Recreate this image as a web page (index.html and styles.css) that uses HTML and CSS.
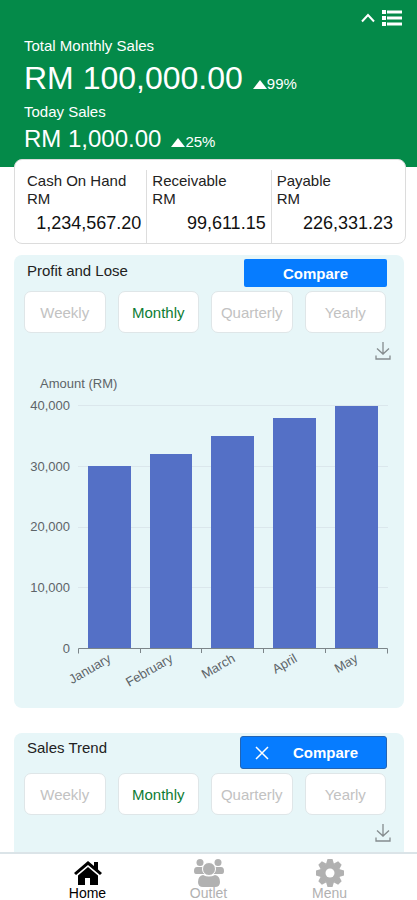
FILE: index.html
```html
<!DOCTYPE html>
<html lang="en">
<head>
<meta charset="utf-8">
<meta name="viewport" content="width=device-width, initial-scale=1">
<title>Sales Dashboard</title>
<link rel="stylesheet" href="styles.css">
</head>
<body>
<header class="hero">
  <div class="hero-tools">
    <button class="icon-button" type="button" aria-label="Collapse">
      <svg width="16" height="16" viewBox="0 0 16 16" fill="none" stroke="currentColor" stroke-width="2"><path d="M2 11.5 8 5l6 6.500"/></svg>
    </button>
    <button class="icon-button" type="button" aria-label="List">
      <svg width="20" height="16" viewBox="0 0 20 16" fill="currentColor"><path d="M0 0h4v4H0zM0 6h4v4H0zM0 12h4v4H0zM5 .5h15v3H5zM5 6.500h15v3H5zM5 12.500h15v3H5z"/></svg>
    </button>
  </div>
  <p class="hero-label">Total Monthly Sales</p>
  <p class="hero-value hero-value-large">RM 100,000.00
    <span class="change"><svg width="14" height="9" viewBox="0 0 14 9" fill="currentColor"><path d="M7 0 14 9H0z"/></svg>99%</span>
  </p>
  <p class="hero-label">Today Sales</p>
  <p class="hero-value">RM 1,000.00
    <span class="change"><svg width="14" height="9" viewBox="0 0 14 9" fill="currentColor"><path d="M7 0 14 9H0z"/></svg>25%</span>
  </p>
</header>

<main class="content">
  <section class="balances">
    <div class="balance"><span>Cash On Hand</span><span>RM</span><span class="balance-value">1,234,567.20</span></div>
    <div class="balance"><span>Receivable</span><span>RM</span><span class="balance-value">99,611.15</span></div>
    <div class="balance"><span>Payable</span><span>RM</span><span class="balance-value">226,331.23</span></div>
  </section>

  <section class="panel">
    <div class="panel-head">
      <h2>Profit and Lose</h2>
      <button class="compare" type="button">Compare</button>
    </div>
    <div class="periods">
      <button type="button">Weekly</button>
      <button type="button" class="active">Monthly</button>
      <button type="button">Quarterly</button>
      <button type="button">Yearly</button>
    </div>
    <button class="icon-button download" type="button" aria-label="Download">
      <svg width="16" height="18" viewBox="0 0 16 18" fill="none" stroke="currentColor" stroke-width="1.300"><path d="M8 0v12M2 6.500l6 5.500 6-5.500M1 13.500V17h14v-3.500"/></svg>
    </button>
    <svg class="chart" viewBox="0 0 390 336" role="img" aria-label="Amount by month">
      <text x="26" y="17">Amount (RM)</text>
      <g class="grid"><path d="M64 34.500H374M64 95.500H374M64 156.500H374M64 216.500H374"/></g>
      <g class="scale">
        <text x="56" y="39">40,000</text>
        <text x="56" y="100">30,000</text>
        <text x="56" y="160">20,000</text>
        <text x="56" y="221">10,000</text>
        <text x="56" y="282">0</text>
      </g>
      <g class="bars">
        <rect x="74" y="95" width="43" height="182"/>
        <rect x="136" y="83" width="42" height="194"/>
        <rect x="197" y="65" width="43" height="212"/>
        <rect x="259" y="47" width="43" height="230"/>
        <rect x="321" y="35" width="43" height="242"/>
      </g>
      <path class="axis" d="M64.500 282.500v-5H373.500v5M126.500 277v5M187.500 277v5M249.500 277v5M311.500 277v5"/>
      <g class="months">
        <text transform="translate(98 290) rotate(-30)">January</text>
        <text transform="translate(160 290) rotate(-30)">February</text>
        <text transform="translate(222 290) rotate(-30)">March</text>
        <text transform="translate(284 290) rotate(-30)">April</text>
        <text transform="translate(345 290) rotate(-30)">May</text>
      </g>
    </svg>
  </section>

  <section class="panel panel-last">
    <div class="panel-head">
      <h2>Sales Trend</h2>
      <button class="compare compare-open" type="button">
        <svg width="14" height="14" viewBox="0 0 14 14" fill="none" stroke="currentColor" stroke-width="1.500"><path d="m1 1 12 12M13 1 1 13"/></svg>
        <span>Compare</span>
      </button>
    </div>
    <div class="periods">
      <button type="button">Weekly</button>
      <button type="button" class="active">Monthly</button>
      <button type="button">Quarterly</button>
      <button type="button">Yearly</button>
    </div>
    <button class="icon-button download" type="button" aria-label="Download">
      <svg width="16" height="18" viewBox="0 0 16 18" fill="none" stroke="currentColor" stroke-width="1.300"><path d="M8 0v12M2 6.500l6 5.500 6-5.500M1 13.500V17h14v-3.500"/></svg>
    </button>
  </section>
</main>

<nav class="tabbar">
  <a href="#home" class="current">
    <svg width="28" height="24" viewBox="0 0 28 24" fill="currentColor"><path d="M14 0 0 12l2 2L14 4l12 10 2-2-4-3.500V1h-4v4z"/><path d="M14 6 4 14.500V24h7v-7h5v7h8v-9.500z"/></svg>
    Home
  </a>
  <a href="#outlet">
    <svg width="30" height="28" viewBox="0 0 30 28" fill="currentColor"><circle cx="6" cy="3.500" r="3.500"/><circle cx="24" cy="3.500" r="3.500"/><path d="M3 8h5q1 0 1 2 0 3 2 5H2q-2 0-2-3 0-4 3-4zM27 8h-5q-1 0-1 2 0 3-2 5h9q2 0 2-3 0-4-3-4z"/><circle cx="15" cy="10" r="6.500" stroke="#fff"/><path d="M9 16q6 3 12 0 5 1 5 7 0 5-5 5H9q-5 0-5-5 0-6 5-7z"/></svg>
    Outlet
  </a>
  <a href="#menu">
    <svg width="28" height="28" viewBox="-14 -14 28 28"><g fill="currentColor"><circle r="10"/><g id="teeth"><path id="tooth" d="m-4-9 1.500-5h5L4-9zM-4 9l1.500 5h5L4 9z"/><use href="#tooth" transform="rotate(45)"/></g><use href="#teeth" transform="rotate(90)"/></g><circle r="4.500" fill="#fff"/></svg>
    Menu
  </a>
</nav>
</body>
</html>
```
FILE: styles.css
```css
* {
  box-sizing: border-box;
}

body {
  margin: 0;
  min-height: 100vh;
  display: flex;
  flex-direction: column;
  background: #fff;
  color: #222;
  font-family: "Liberation Sans", Arial, sans-serif;
  font-size: 15px;
}

p,
h2 {
  margin: 0;
}

button {
  font: inherit;
  cursor: pointer;
}

svg {
  display: block;
}

.icon-button {
  padding: 0;
  border: 0;
  background: none;
  color: inherit;
}

.hero {
  padding: 10px 15px 14px 24px;
  background: #048a49;
  color: #fff;
}

.hero-tools {
  display: flex;
  justify-content: flex-end;
  gap: 6px;
  margin-bottom: 10px;
}

.hero-label {
  line-height: 20px;
}

.hero-value {
  display: flex;
  align-items: baseline;
  gap: 10px;
  margin-top: 3px;
  font-size: 24px;
  line-height: 28px;
}

.hero-value-large {
  margin-top: 2px;
  margin-bottom: 4px;
  font-size: 32px;
  line-height: 40px;
}

.change {
  display: flex;
  align-items: baseline;
  font-size: 15px;
  line-height: 16px;
}

.content {
  flex: 1;
  display: flex;
  flex-direction: column;
  padding: 0 13px 0 14px;
}

.balances {
  display: grid;
  grid-template-columns: repeat(3, 1fr);
  margin: -8px -2px 11px 0;
  padding: 10px 10px 0 7px;
  border: 1px solid #dcdcdc;
  border-radius: 8px;
  background: #fff;
}

.balance {
  display: flex;
  flex-direction: column;
  padding: 2px 5px 9px;
  line-height: 18px;
}

.balance:last-child {
  padding-right: 2px;
}

.balance + .balance {
  border-left: 1px solid #ddd;
}

.balance-value {
  margin-top: 4px;
  color: #111;
  font-size: 18px;
  line-height: 22px;
  text-align: right;
}

.panel {
  margin-bottom: 25px;
  padding-top: 4px;
  border-radius: 8px;
  background: #e7f6f8;
}

.panel-last {
  flex: 1;
  margin-bottom: 0;
  padding-top: 3px;
  border-radius: 8px 8px 0 0;
}

.panel-head {
  display: flex;
  justify-content: space-between;
  align-items: flex-start;
  padding: 0 17px 0 13px;
}

.panel-head h2 {
  font-size: 15px;
  font-weight: 400;
  line-height: 24px;
}

.compare {
  width: 143px;
  height: 28px;
  border: 0;
  border-radius: 2px;
  background: #067cff;
  color: #fff;
  font-weight: 700;
}

.compare-open {
  display: flex;
  align-items: center;
  gap: 24px;
  width: 147px;
  height: 33px;
  padding: 0 14px;
  border: 1px solid #2264b4;
  border-radius: 3px;
}

.periods {
  display: grid;
  grid-template-columns: repeat(4, 1fr);
  gap: 12px;
  margin-top: 4px;
  padding: 0 18px 0 10px;
}

.periods button {
  height: 42px;
  padding: 0;
  border: 1px solid #dfe6e8;
  border-radius: 7px;
  background: #fff;
  color: #c2c2c2;
}

.periods .active {
  color: #0c7c35;
}

.download {
  display: block;
  margin: 9px 13px 8px auto;
  color: #858c8e;
}

.chart {
  width: 100%;
  height: auto;
  margin: 11px 0 1px;
  font-size: 13px;
  fill: #5d6468;
}

.scale,
.months {
  text-anchor: end;
}

.grid {
  stroke: #dbe7ec;
}

.bars {
  fill: #5470c6;
}

.axis {
  fill: none;
  stroke: #7c8589;
}

.tabbar {
  display: grid;
  grid-template-columns: 121px 121px 121px;
  justify-content: center;
  height: 48px;
  padding-top: 6px;
  border-top: 2px solid #dbe4e8;
  background: #fff;
}

.tabbar a {
  display: grid;
  grid-template-rows: 26px 14px;
  justify-items: center;
  align-items: center;
  color: #b1b1b1;
  font-size: 14px;
  line-height: 14px;
  text-decoration: none;
}

.tabbar .current {
  color: #000;
}
```
